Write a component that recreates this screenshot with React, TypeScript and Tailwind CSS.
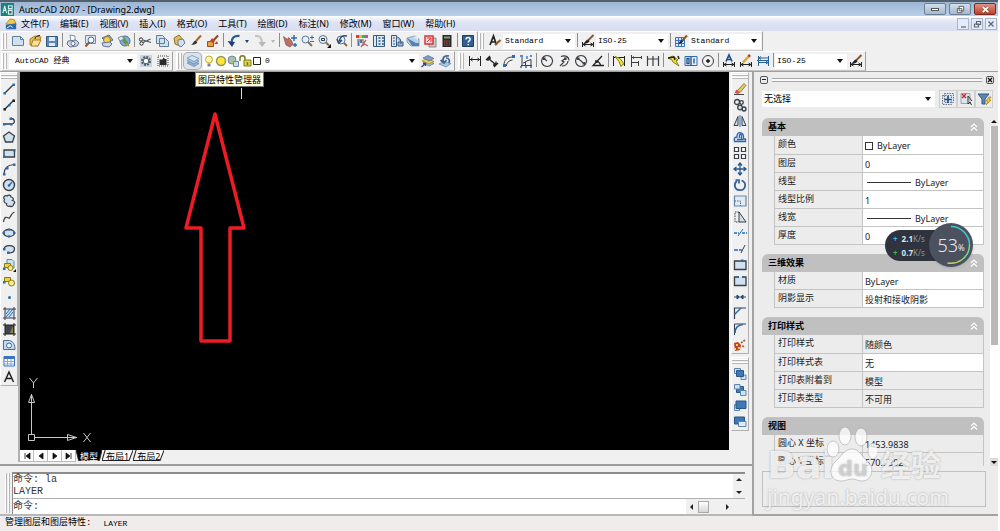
import React from 'react';
import clsx from 'clsx';

const K = '#3a3f46';
const B = '#2a6cb0';
const L = '#cfe0ef';
const Y = '#f2d23c';

const DIM_LINE = (
  <path d="M2.500 11.500h11M2.500 9v5M13.500 9v5M5.500 10l-2.500 1.500 2.500 1.500M10.500 10l2.500 1.500-2.500 1.500" stroke="#222" fill="none" />
);

const ORDER_FRONT = <path d="M4.500 4.500h7v6h-7z" fill="#3f78b3" stroke="#24588f" />;

const ICONS: Record<string, React.ReactNode> = {
  new: <path d="M2.500 3.500h8l3 3v6h-11z M10.500 3.500v3h3" fill={L} stroke="#5f7f9c" />,
  open: (
    <>
      <path d="M3 6l5-3 6 1-3 9-8-1z" fill="#e8bd4e" stroke="#a97e22" />
      <path d="M6 7h8l-3 6H4z" fill="#f8e39b" stroke="#a97e22" />
      <path d="M8 6c0-2 2-3.500 5-3.500" stroke="#222" fill="none" />
    </>
  ),
  save: (
    <>
      <path d="M2.500 3.500h11v10h-11z" fill="#5b86b5" stroke="#35597f" />
      <path d="M5 4h6v4H5zM5 10h6v3H5z" fill="#dfeaf5" />
    </>
  ),
  plot: (
    <>
      <path d="M5 2l5 1v5l-4 .5z" fill="#fff" stroke="#8290a8" />
      <path d="M3 8l8-1 3 3-2 3-7 1-3-3z" fill="#cdd6e6" stroke="#65738f" />
      <circle cx="8" cy="10.500" r="2" fill="#fff" stroke="#65738f" />
    </>
  ),
  preview: (
    <>
      <path d="M3.500 2.500h10v8h-10z" fill="#dce9f5" stroke="#6f8fb0" />
      <circle cx="9" cy="7" r="3" fill="#f6fbff" stroke="#4b6f95" />
      <path d="M7 9.500l-3.500 4" stroke="#8a5a2c" strokeWidth="2" />
    </>
  ),
  publish: (
    <>
      <path d="M3 5l7-3 4 5-6 3z" fill="#8fb4d9" stroke="#4d6e94" />
      <circle cx="8" cy="7" r="3.500" fill="#f0cf58" stroke="#9c7a1c" />
      <path d="M3 10l8-1 2 2-3 3-6-1z" fill="#cdd6e6" stroke="#65738f" />
    </>
  ),
  globe: (
    <>
      <circle cx="9" cy="8" r="5" fill="#7fb0d6" stroke="#4d6e94" />
      <path d="M7 4c3 0 2 3 4 4s1 3-1 4c-2-1-2-3-4-4z" fill="#5b9a4e" />
      <path d="M2 5l4-2 2 3-4 2z" fill="#dfe7f1" stroke="#768aa5" />
      <path d="M10 11l3 2" stroke="#c79a2a" strokeWidth="2" />
    </>
  ),
  cut: (
    <>
      <path d="M6 7l8 2.500M6 9.500L13.500 6" stroke="#4c5866" strokeWidth="1.300" />
      <circle cx="4" cy="6.500" r="1.700" fill="none" stroke="#333" />
      <circle cx="4.500" cy="10.500" r="1.700" fill="none" stroke="#333" />
    </>
  ),
  copy: <path d="M2.500 2.500h6l2 2v6h-8z M5.500 5.500h6l3 3v5h-9z" fill={L} stroke="#5f7f9c" />,
  paste: (
    <>
      <path d="M3 5l5-3 5 6-4 5-5-2z" fill="#e2bb66" stroke="#94702a" />
      <path d="M7 7l5-1 2 4-4 4-3-2z" fill={L} stroke="#5f7f9c" />
    </>
  ),
  match: (
    <>
      <path d="M8 8l5-5.500" stroke="#a8662c" strokeWidth="2" />
      <path d="M3 11.500c2 0 2-3 4.500-4l1.800 1.800c-1 2.200-3.500 3-6.300 2.200z" fill="#333" />
    </>
  ),
  blockedit: (
    <>
      <path d="M2.500 8.500h6v5h-6z" fill="#e9a23c" stroke="#9a4d1e" />
      <path d="M7 9l6-6.500" stroke="#8a4a22" strokeWidth="2" />
      <path d="M5 8l2-3 3 3-2 2zM9 11l3-3 1 3z" fill="#c2432c" />
    </>
  ),
  undo: (
    <>
      <path d="M13.500 3C8 2.500 5.500 5 5.500 10" stroke="#2a5c92" strokeWidth="2.200" fill="none" />
      <path d="M1.500 8l4.500 6 3-5z" fill="#1f3f74" />
    </>
  ),
  redo: (
    <>
      <path d="M3 3c5-.5 7 2 7 7" stroke="#c4c4c4" strokeWidth="2.200" fill="none" />
      <path d="M6.500 9l3.500 5 4-5z" fill="#b8b8b8" />
    </>
  ),
  pan: (
    <>
      <path d="M1.500 3.500l4 3 1-2 3 3 1.500 4-3 2.500-4-2z" fill="#b8706a" stroke="#8a4c48" strokeWidth=".7" />
      <path d="M12 2v6M9 5h6M11 12h4M13 10v4" stroke={B} strokeWidth="1.400" />
    </>
  ),
  zoomrt: (
    <>
      <circle cx="6.500" cy="6.500" r="3.500" fill="#e5f0fa" stroke="#56789c" />
      <path d="M9 9l4 4" stroke="#8a6a48" strokeWidth="2" />
      <path d="M11 4.500h4M13 2.500v4M11 8.500h4" stroke={B} />
    </>
  ),
  zoomwin: (
    <>
      <circle cx="7" cy="6.500" r="4" fill="#e5f0fa" stroke="#56789c" />
      <path d="M5.500 5.500h3v2h-3z" fill="none" stroke="#333" />
      <path d="M10 9.500l3 3" stroke="#8a6a48" strokeWidth="2" />
      <path d="M15 11v4h-4z" fill="#111" />
    </>
  ),
  zoomprev: (
    <>
      <circle cx="8" cy="7" r="4" fill="#e5f0fa" stroke="#56789c" />
      <path d="M11 10l3 3" stroke="#8a6a48" strokeWidth="2" />
      <path d="M14 3C9 2 7 4 6.500 8M4 6l2 4 3-3" stroke="#2a4c78" strokeWidth="1.500" fill="none" />
    </>
  ),
  props: (
    <>
      <path d="M2 2h3v3H2z" fill="#e33" />
      <path d="M5 2h3v3H5z" fill="#e3c12b" />
      <path d="M8 2h3v3H8z" fill="#3bb54a" />
      <path d="M11 2h3v3h-3z" fill="#d63bd0" />
      <path d="M3 7h6v6M12 7l-5 7M9 10l5 3" stroke="#b26a6a" strokeWidth="1.300" fill="none" />
      <path d="M4.500 8v5M7 7v3" stroke="#4575b0" strokeWidth="2" />
    </>
  ),
  dcenter: (
    <>
      <path d="M2.500 2.500h11v11h-11z" fill="#dce9f5" stroke="#35597f" />
      <path d="M5.500 3v10" stroke="#35597f" />
      <path d="M7.500 5h2M11 5h2M7.500 8h2M11 8h2M7.500 11h2M11 11h2" stroke="#35597f" strokeWidth="1.500" />
    </>
  ),
  palettes: (
    <>
      <path d="M3.500 2.500h5v11h-5z" fill="#dce9f5" stroke="#35597f" />
      <path d="M5 5h2M5 8h2M5 11h2" stroke="#35597f" />
      <path d="M8 4c4 0 5 3 5 7M10 9h5v4h-5z" stroke="#35597f" fill="#9dbbd8" />
    </>
  ),
  sheetset: (
    <>
      <path d="M2 5l8-2 4 3v7H6l-4-4z" fill="#bcd3e6" stroke="#8aa2b6" />
      <path d="M2 5l9 5h3v3H7z" fill="#4f86b5" />
      <path d="M8 4l5-1v4z" fill="#e8eef4" />
    </>
  ),
  markup: (
    <>
      <path d="M7 5h7v9H7z" fill="#c6c6c6" stroke="#8c8c8c" />
      <path d="M3 3h8v8H3z" fill="#f7dada" stroke="#d8343a" strokeWidth="1.500" />
      <path d="M5 5h4v4M5 9l4-4" stroke="#d8343a" fill="none" />
    </>
  ),
  calc: (
    <>
      <path d="M3.500 2h9v12h-9z" fill="#2b2b2b" />
      <path d="M5 3.500h6v2H5z" fill="#7ba56b" />
      <path d="M5 8h6M5 10h6M5 12h6" stroke="#c24a4a" strokeDasharray="1.500 .8" />
    </>
  ),
  help: (
    <>
      <path d="M2.500 2.500h11v11h-11z" fill="#2f5f94" stroke="#1d3f66" />
      <path d="M6 6.500c0-3 4.500-2.500 4.200 0-.2 1.400-2 1.300-2 3M8.200 11v1.300" stroke="#fff" strokeWidth="1.500" fill="none" />
    </>
  ),
  textstyle: (
    <>
      <path d="M3 12l3.500-9 3 9M4.300 9h4" stroke="#222" strokeWidth="1.700" fill="none" />
      <path d="M8 12l5.500-5" stroke="#8a5a2c" strokeWidth="2.200" />
    </>
  ),
  dimstyle: (
    <>
      {DIM_LINE}
      <path d="M8 7.500l5.500-5.500" stroke="#8a5a2c" strokeWidth="2" />
      <path d="M3 10.500c2-.5 2.500-3.500 5-4l1.500 2c-1 1.500-3.500 2.500-6.500 2z" fill="#222" />
    </>
  ),
  tablestyle: (
    <>
      <path d="M2.500 4.500h9v9h-9zM2.500 7.500h9M2.500 10.500h9M5.500 4.500v9M8.500 4.500v9" fill="#dce9fa" stroke="#3b73c4" />
      <path d="M9 8l5-5.500" stroke="#8a5a2c" strokeWidth="2" />
      <path d="M5 10.500c1.500-.5 2-3 4-3.500l1 1.500c-1 1.500-3 2.500-5 2z" fill="#222" />
    </>
  ),
  gear: (
    <>
      <path d="M2 2h12v12H2z" fill="#c9d6e2" />
      <circle cx="8" cy="8" r="4" fill="none" stroke="#4c5c6c" strokeWidth="2" strokeDasharray="2 1.100" />
      <circle cx="8" cy="8" r="2.800" fill="#fff" stroke="#4c5c6c" />
    </>
  ),
  gearsave: (
    <>
      <path d="M3 3h10v10H3z" fill="none" stroke="#444" strokeDasharray="1 1" />
      <path d="M4.500 6.500h3l1-2 1.500 1.500h1.500v6h-7z" fill="#2a2a2a" />
    </>
  ),
  layers: (
    <>
      <path d="M2 10l5-2.500 7 3-5 3z" fill="#8fb3d6" stroke="#5f86ad" strokeWidth=".7" />
      <path d="M2 7.500L7 5l7 3-5 3z" fill="#a9c6e2" stroke="#5f86ad" strokeWidth=".7" />
      <path d="M2 5l5-2.500 7 3-5 3z" fill="#d3e4f3" stroke="#5f86ad" strokeWidth=".7" />
    </>
  ),
  layercur: (
    <>
      <path d="M3 10l5-2.500 6 3-5 2.500z" fill="#a9c6e2" stroke="#4d6e94" strokeWidth=".7" />
      <path d="M2 8l5-2.500 7 3-5 2.500z" fill="#f0cf58" stroke="#9c7a1c" strokeWidth=".7" />
      <path d="M3 5l5-2.500 6 3-5 2.500z" fill="#7f9fc0" stroke="#4d6e94" strokeWidth=".7" />
      <path d="M1.500 14l4-3.500M3 10.500h2.500V13" stroke="#2a4c78" strokeWidth="1.300" />
    </>
  ),
  layerprev: (
    <>
      <path d="M2 11l5-2.500 7 2-5 3.500z" fill="#a9c6e2" stroke="#5f86ad" strokeWidth=".7" />
      <path d="M12 3C7 2 5 5 6.500 9M3.500 7l3.500 3 2.500-3M9 5c3 0 4 2 3 5" stroke="#41658f" strokeWidth="1.700" fill="none" />
    </>
  ),
  bulb: (
    <>
      <circle cx="8" cy="6.500" r="3.500" fill="#fff7b0" stroke="#c9a92e" />
      <path d="M6.500 10.500h3v3h-3z" fill="#7c8590" />
    </>
  ),
  sun: <circle cx="8" cy="8" r="4.500" fill="#ffe43a" stroke="#8f9a5a" strokeWidth="1.500" />,
  vpsun: (
    <>
      <circle cx="7" cy="7" r="4" fill="#a9c0a9" stroke="#6f8aa0" />
      <path d="M8.500 8.500h5v5h-5z" fill="#cfdbe6" stroke="#6f8aa0" />
    </>
  ),
  lock: (
    <>
      <path d="M7 7h7v6H7z" fill="#dcd84a" stroke="#7c7a1c" />
      <path d="M3 8V5c0-3 5-3 5 0v2M10.500 9v3" stroke="#7c7a1c" strokeWidth="1.500" fill="none" />
    </>
  ),
  swatch: <path d="M4.500 4.500h7v7h-7z" fill="#fff" stroke="#222" />,
  dimlin: <path d="M2.500 3v10M13.500 3v10M3 6.500h10M5.500 5L3.500 6.500l2 1.500M10.500 5l2 1.500-2 1.500" stroke="#222" fill="none" />,
  dimali: <path d="M2 7l4-4M10 14l4-4M4.500 5.500l7 6M4 8V5h3M12 8.500v3.500H9" stroke="#222" strokeWidth="1.300" fill="none" />,
  dimarc: (
    <>
      <path d="M3 12c0-5 3-8 9-8M5.500 13c0-3 2-5.500 6-6" stroke={K} fill="none" />
      <path d="M2 11h3v3H2zM11 2h3v3h-3z" fill={B} />
    </>
  ),
  dimord: (
    <>
      <path d="M4 4v9M3 12.500h11M7.500 12.500V8.500l5.500-2v6M5 10l3-1" stroke={K} fill="none" />
      <path d="M2 3h3M9 3v3M12 3h2M2 14h2M7 14h2M12 14h2" stroke={B} strokeWidth="1.300" />
    </>
  ),
  dimrad: <path d="M8 2.500a5.500 5.500 0 1 0 .1 0M8 8L4.500 5M4.500 7V5h2" stroke={K} fill="none" strokeWidth="1.200" />,
  dimjog: <path d="M5 3.500c5-2 8 1 8 4M12 8c0 3-3 5-6 5M4 13l4-4-2-1 4-3M8 5h2v2" stroke={K} fill="none" strokeWidth="1.200" />,
  dimdia: <path d="M8 2.500a5.500 5.500 0 1 0 .1 0M4.500 5l7 6M4.500 7V5h2M11.500 9v2h-2" stroke={K} fill="none" strokeWidth="1.200" />,
  dimang: <path d="M12 3L3 12.500h11M6 8c2 0 4 2 4.500 4M5 8h2v2" stroke="#222" fill="none" strokeWidth="1.300" />,
  qdim: (
    <>
      <path d="M2.500 3v10M13.500 3v10M3 4.500h10" stroke="#222" />
      <path d="M4 3.500l5 2 4 5.500-2 1-1 1.500-2-5z" fill="#f5e52c" stroke="#8a7d12" />
    </>
  ),
  dimbase: <path d="M3.500 2v12M4 4.500h9.500M13.500 3v3M4 9.500h6M10.500 8v5M6 3.500L4.500 4.500 6 5.500" stroke={K} fill="none" />,
  dimcont: <path d="M2.500 3v10M8 3v10M13.500 3v10M3 6h10" stroke={K} fill="none" strokeWidth="1.200" />,
  leader: (
    <>
      <path d="M2 5l5-2 5 4-2 1 3 5-6-4-1-2z" fill="#f5e52c" stroke="#8a7d12" />
      <path d="M2 5l6-1 1 3M12 3l1 3" stroke="#222" strokeWidth="1.500" fill="none" />
    </>
  ),
  tol: (
    <>
      <path d="M2 3.500h12v9H2z" fill="#e6eff9" stroke={B} />
      <path d="M8 3.500v9M4 5.500h2v5H4zM11 5.500v5" stroke="#224f85" fill="none" strokeWidth="1.300" />
    </>
  ),
  center: (
    <>
      <circle cx="8" cy="8" r="5.500" fill="none" stroke={K} />
      <path d="M8 6v4M6 8h4" stroke="#111" strokeWidth="1.400" />
    </>
  ),
  dimedit: (
    <>
      {DIM_LINE}
      <path d="M5 8.500L8 2l3 6.500M6 6.500h4" stroke="#1e4f8c" strokeWidth="1.700" fill="none" />
    </>
  ),
  dimtedit: (
    <>
      {DIM_LINE}
      <path d="M5 9.500L11 3" stroke="#e0a62c" strokeWidth="2.500" />
      <path d="M10.500 3.500L12 2" stroke="#b33" strokeWidth="2.500" />
    </>
  ),
  dimupd: <path d="M3.500 3v10M13.500 3v10M4 5h9M4 9.500h9M6 3.500L4 5l2 1.500M11 8l2 1.500-2 1.500M2 7.500h12" stroke="#24609c" fill="none" />,

  line: (
    <>
      <path d="M4 12L12 4" stroke={K} strokeWidth="1.400" />
      <path d="M2.500 11h2.500v2.500H2.500zM11.500 2.500H14V5h-2.500z" fill={B} />
    </>
  ),
  xline: (
    <>
      <path d="M3 13L13 3" stroke="#333" strokeWidth="1.400" />
      <path d="M2.500 11h2.500v2.500H2.500zM11.500 2.500H14V5h-2.500z" fill="#222" />
      <path d="M7 7h2.500v2.500H7z" fill={B} />
    </>
  ),
  pline: (
    <>
      <path d="M3 11h7c5 0 4-5.500 0-5.500" stroke={K} strokeWidth="1.300" fill="none" />
      <path d="M2 10h2.500v2.500H2zM9 10h2.500v2.500H9zM8.500 4.500H11V7H8.500z" fill={B} />
    </>
  ),
  polygon: <path d="M8 3l5.500 4-2 6h-7l-2-6z" fill={L} stroke={K} strokeWidth="1.300" />,
  rect: (
    <>
      <path d="M3 5h10.500v7H3z" fill={L} stroke={K} strokeWidth="1.300" />
      <path d="M2 10.500h2.500V13H2zM12 4h2.500v2.500H12z" fill={B} />
    </>
  ),
  arc: (
    <>
      <path d="M3 13c0-6 4-9 10-9.500" stroke={K} strokeWidth="1.200" fill="none" />
      <path d="M2 12h2.500v2.500H2zM5 6h2.500v2.500H5zM12 2.500h2.500V5H12z" fill={B} />
    </>
  ),
  circle: (
    <>
      <circle cx="8" cy="8" r="5.500" fill={L} stroke={K} strokeWidth="1.400" />
      <path d="M8 8.500l3-3.500" stroke={B} strokeWidth="1.400" />
      <circle cx="8" cy="8.500" r="1.300" fill={B} />
    </>
  ),
  revcloud: (
    <path d="M3.500 6.500C1.500 4.500 3.500 2 6 3c1.500-1.500 4-1 4 1 2.500 0 3 2.500 1.500 3.500C14 8 14.500 10.500 12.500 11c.5 2-2 3.500-3.500 2-2 1-4-.5-3.500-2.500C3 10 2.500 8 3.500 6.500z" fill={L} stroke={K} strokeWidth="1.200" />
  ),
  spline: <path d="M2.500 13c1-6 3-5 5-4s2-5 6-6" stroke={K} strokeWidth="1.200" fill="none" />,
  ellipse: (
    <>
      <ellipse cx="8" cy="8" rx="5.500" ry="3.500" fill={L} stroke={K} strokeWidth="1.300" />
      <path d="M1.500 7H4v2H1.500zM12 7h2.500v2H12zM7 3.500h2v2H7zM7 10.500h2v2H7z" fill={B} />
    </>
  ),
  ellarc: (
    <>
      <path d="M3 8c1-5 10.500-4 10.500 0 0 3-3 4-6 4" fill={L} stroke={K} strokeWidth="1.300" />
      <path d="M2 7h2.500v2.500H2zM6 10.500h2.500V13H6z" fill={B} />
    </>
  ),
  insblock: (
    <>
      <path d="M6 2.500h5l2 2V11H6z" fill={L} stroke="#5f86ad" />
      <path d="M3.500 6.500h6v4h-6z" fill={Y} stroke="#8a7d12" />
      <circle cx="9.500" cy="11" r="2.500" fill="#f6ec9a" stroke="#8a7d12" />
      <path d="M15 12v3h-3z" fill="#111" />
      <path d="M2 10.500h2.500V13H2z" fill={B} />
    </>
  ),
  mkblock: (
    <>
      <path d="M3.500 4.500h6v4h-6z" fill={Y} stroke="#8a7d12" />
      <circle cx="10.500" cy="10" r="3" fill="#f6ec9a" stroke="#8a7d12" />
      <path d="M2 8h2.500v2.500H2z" fill={B} />
    </>
  ),
  point: <circle cx="8.500" cy="8.500" r="1.500" fill={B} />,
  hatch: (
    <>
      <path d="M4 4h9v9H4z" fill="#cfe0f4" />
      <path d="M4 2v13M13 2v13M2 4h13M2 13h13" stroke={K} />
      <path d="M5 9l4-5M5 12l7-8M8 12l4-5" stroke={B} />
    </>
  ),
  gradient: (
    <>
      <path d="M4 4h9v9H4z" fill="#3f4652" />
      <path d="M4 2v13M13 2v13M2 4h13M2 13h13" stroke="#222" />
      <path d="M9 12l3-7v7z" fill="#8d8540" />
    </>
  ),
  region: (
    <>
      <path d="M2.500 3.500h6c4 1 5.500 4 5.500 9H2.500z" fill="#c6dbef" stroke="#4d6e94" />
      <circle cx="8" cy="8.500" r="2.500" fill="#eef5fb" stroke={B} />
    </>
  ),
  table: (
    <>
      <path d="M3 3.500h10.500v9.500H3z" fill="#fff" stroke="#3b73c4" />
      <path d="M3 4h10.500v2H3z" fill="#3b73c4" />
      <path d="M3 8.500h10M3 11h10M6.500 6v7M10 6v7" stroke="#7fa6dd" />
    </>
  ),
  mtext: <path d="M3.500 13L8 3l4.500 10M5.300 9.500h5.400" stroke="#222" strokeWidth="1.500" fill="none" />,

  erase: (
    <>
      <path d="M5 10l7-7.500 2 2-6 7z" fill="#e9c65a" stroke="#6a5a2c" strokeWidth=".7" />
      <path d="M4.500 8.500L8 11.500l-2 1.500-3.500-1z" fill="#d45454" />
      <path d="M2 13.500h10" stroke="#444" />
    </>
  ),
  mcopy: (
    <>
      <circle cx="5" cy="5" r="2.500" fill="none" stroke={K} strokeWidth="1.300" />
      <circle cx="9.500" cy="5.500" r="1.800" fill="none" stroke={K} strokeWidth="1.300" />
      <circle cx="12" cy="12" r="2" fill={L} stroke={K} strokeWidth="1.300" />
      <circle cx="8" cy="10.500" r="2.300" fill={L} stroke={K} strokeWidth="1.300" />
    </>
  ),
  mirror: (
    <>
      <path d="M6 3.500v9H2zM10 3.500v9h4z" fill={L} stroke={K} />
      <path d="M8 2v12" stroke={B} />
    </>
  ),
  offset: <path d="M2.500 12.500h11V10h-2c1-8-7.500-8-6.500-2-3 0-3 2-2.500 4.500zM5 10.500h6M7.500 9V6c1-1.500 2 0 2 1v3" fill={L} stroke="#3268a8" strokeWidth="1.300" />,
  array: <path d="M2.500 2.500h4v4h-4zM9.500 2.500h4v4h-4zM2.500 9.500h4v4h-4zM9.500 9.500h4v4h-4z" fill="#fff" stroke={K} strokeWidth="1.200" />,
  move: <path d="M8 2v12M2 8h12M6 4.500L8 2l2 2.500M6 11.500L8 14l2-2.500M4.500 6L2 8l2.500 2M11.500 6L14 8l-2.500 2" stroke="#24588f" strokeWidth="1.300" fill="none" />,
  rotate: <path d="M5 4C1.500 6.500 2 13 8 13.200c6 0 7-7.700 1.500-9.700M3.500 3H7v3.500" stroke="#2f5f94" strokeWidth="1.700" fill="none" />,
  scale: (
    <>
      <path d="M2.500 3h11.500v10H2.500z" fill="#dfebf5" stroke="#6c88a6" strokeWidth="1.200" />
      <path d="M2.500 8h6v5" stroke="#5a6a7c" strokeDasharray="1.500 1" />
    </>
  ),
  stretch: (
    <>
      <path d="M7 3v10h7z" fill={L} stroke={K} />
      <path d="M7 3H3v10h4" stroke={K} strokeDasharray="1.500 1" />
    </>
  ),
  trim: (
    <>
      <path d="M2 8h5M10 8h5" stroke={B} strokeWidth="1.300" strokeDasharray="3 1" />
      <path d="M6 11l5-7" stroke={B} />
    </>
  ),
  extend: (
    <>
      <path d="M2 9h8" stroke={B} strokeWidth="1.300" strokeDasharray="4 1" />
      <path d="M9 12l4-8" stroke={K} />
    </>
  ),
  breakpt: (
    <>
      <path d="M2.500 4h11.500v8.500H2.500z" fill={L} stroke={K} strokeWidth="1.300" />
      <path d="M9 2.500h2.500V5H9z" fill={B} />
    </>
  ),
  break: (
    <>
      <path d="M5.500 4h-3v8.500H14V4h-3" fill={L} stroke={K} strokeWidth="1.300" />
      <path d="M5 3h2v2H5zM10 3h2v2h-2z" fill={B} />
    </>
  ),
  join: <path d="M2 8h5M14 8H9M5 6L7.500 8 5 10zM11 6L8.500 8l2.500 2z" stroke="#24486f" fill="#24486f" />,
  chamfer: (
    <>
      <path d="M2.500 14V3H14" stroke={K} strokeWidth="1.200" fill="none" />
      <path d="M2.500 9.500l6.500-6.500" stroke={B} strokeWidth="1.500" />
    </>
  ),
  fillet: (
    <>
      <path d="M2.500 14V3H14" stroke={K} fill="none" />
      <path d="M3 12c0-5 3-8 8-8.500" stroke={B} strokeWidth="1.700" fill="none" />
    </>
  ),
  explode: (
    <>
      <path d="M2 6l4-1 3 3-1 5-5 1z" fill="#c93b2b" />
      <path d="M4 7h2v2H4zM6 10h2v2H6zM3 11h1v2H3z" fill="#f5d93c" />
      <path d="M9 6l4-3M10 9l3 1" stroke="#9a6a3a" strokeWidth="1.700" strokeDasharray="2 1" />
    </>
  ),
  front: (
    <>
      <path d="M2.500 2.500h6v5h-6zM9 9h5v4.500H9z" fill={L} stroke="#5f86ad" />
      {ORDER_FRONT}
    </>
  ),
  forward: (
    <>
      {ORDER_FRONT}
      <path d="M2.500 2.500h5.500v4.500H2.500zM8.500 8.500h5.500v5H8.500z" fill={L} stroke="#5f86ad" />
    </>
  ),
  above: (
    <>
      <path d="M2.500 6.500h5v6h-5z" fill={L} stroke="#5f86ad" />
      <path d="M4 3h10v7.500H4z" fill="#3f78b3" stroke="#24588f" />
    </>
  ),
  under: (
    <>
      <path d="M2.500 3h10v7h-10z" fill="#3f78b3" stroke="#24588f" />
      <path d="M6.500 7.500H14v5H6.500z" fill="#dfebf5" stroke="#5f86ad" />
    </>
  ),
  pickadd: (
    <>
      <path d="M2.500 4.500h9v9h-9zM4.500 2.500h9v9h-9z" fill="#dce6f0" stroke="#6a7686" strokeDasharray="1.500 1" />
      <path d="M8 5v7M4.500 8.500h7" stroke="#1e4f8c" strokeWidth="1.700" />
    </>
  ),
  select: (
    <>
      <path d="M3 2.500h9v10H3z" fill="#dce6f0" stroke="#98a4b2" />
      <path d="M4 3l4 4M8 3L4 7" stroke="#d02a2a" strokeWidth="1.500" />
      <path d="M10 5v8l2-2 1.500 3M10 5l4 5" stroke="#333" fill="none" />
    </>
  ),
  quicksel: (
    <>
      <path d="M2 3h11l-4 5v5H6V8z" fill="#5b86b5" stroke="#35597f" />
      <path d="M13 6l-3 4h2l-2 4 5-5h-2l2-3z" fill={Y} stroke="#9c7a1c" strokeWidth=".7" />
    </>
  ),
};

function Icon({ name }: { name: string }) {
  return (
    <svg viewBox="0 0 16 16" className="h-4 w-4 shrink-0" fill="none" aria-hidden="true">
      {ICONS[name]}
    </svg>
  );
}

function Tool({ name, active }: { name: string; active?: boolean }) {
  return (
    <button
      type="button"
      aria-label={name}
      className={clsx(
        'flex h-4 w-[17px] shrink-0 items-center justify-center',
        active && 'rounded-sm bg-[#dfe3e8] ring-1 ring-[#a9afb8]'
      )}
    >
      <Icon name={name} />
    </button>
  );
}

function Sep() {
  return (
    <span className="flex h-4 w-1 shrink-0 justify-center">
      <span className="h-3.5 w-px bg-[#8e8e8e]" />
    </span>
  );
}

// space separated tool names, "|" is a divider
function Tools({ names }: { names: string }) {
  return names.split(' ').map((n, i) => (n === '|' ? <Sep key={i} /> : <Tool key={i} name={n} />));
}

function Grip({ vertical }: { vertical?: boolean }) {
  return (
    <span className={clsx('flex shrink-0 gap-px', vertical ? 'h-[7px] w-4 flex-col' : 'w-[7px] self-stretch py-px')}>
      <span className={clsx('border-[#b5b5b5] bg-white', vertical ? 'h-0.5 w-full border-b' : 'h-full w-0.5 border-r')} />
      <span className={clsx('border-[#b5b5b5] bg-white', vertical ? 'h-0.5 w-full border-b' : 'h-full w-0.5 border-r')} />
    </span>
  );
}

function Toolbar({ label, children }: { label: string; children: React.ReactNode }) {
  return (
    <div
      role="toolbar"
      aria-label={label}
      className="flex h-5 shrink-0 items-center border border-t-white border-r-[#a0a0a0] border-b-[#c4c4c4] border-l-white pr-px"
    >
      <Grip />
      {children}
    </div>
  );
}

function Combo({ label, value, className }: { label: string; value: string; className?: string }) {
  return (
    <span className={clsx('relative flex h-[15px] shrink-0 items-center bg-white', className)}>
      <select
        aria-label={label}
        className="h-full w-full appearance-none bg-transparent pl-0.5 font-['Liberation_Mono','Noto_Sans_CJK_SC',monospace] text-[8px] text-black outline-none"
      >
        <option>{value}</option>
      </select>
      <svg viewBox="0 0 6 4" className="pointer-events-none absolute right-1 h-1 w-1.5">
        <path d="M0 0h6L3 4z" fill="#111" />
      </svg>
    </span>
  );
}

function Caret({ dim }: { dim?: boolean }) {
  return (
    <button type="button" aria-label="history" className="flex h-4 w-[9px] items-center justify-center">
      <svg viewBox="0 0 4 3" className="h-[3px] w-1">
        <path d="M0 0h4L2 3z" fill={dim ? '#b5b5b5' : '#1f3f74'} />
      </svg>
    </button>
  );
}

const MENUS = ['文件(F)', '编辑(E)', '视图(V)', '插入(I)', '格式(O)', '工具(T)', '绘图(D)', '标注(N)', '修改(M)', '窗口(W)', '帮助(H)'];

function TitleBar() {
  return (
    <header className="flex h-4 items-center border-t-2 border-[#54606e] bg-linear-to-b from-[#9cb5d2] to-[#b9d0ea] pr-0.5 pl-px">
      <svg viewBox="0 0 14 14" className="h-[13px] w-[13px]">
        <path d="M0 0h14v14H0z" fill="#1d7f7c" />
        <path d="M2 11l2-8 2 8M2.500 8h3M8 3h4v3H8zM8 8h4v4H8z" stroke="#d8f0ea" fill="none" strokeWidth="1.200" />
      </svg>
      <h1 className="ml-[5px] text-[9px] leading-[13px] text-black">AutoCAD 2007 - [Drawing2.dwg]</h1>
      <div className="ml-auto flex gap-[3px]">
        <button type="button" aria-label="最小化" className="flex h-3 w-[22px] items-center justify-center rounded-xs border border-[#6d7f96] bg-linear-to-b from-[#d3dfec] to-[#a5b8d0]">
          <span className="h-[3px] w-2 border border-[#555] bg-white" />
        </button>
        <button type="button" aria-label="还原" className="flex h-3 w-[22px] items-center justify-center rounded-xs border border-[#6d7f96] bg-linear-to-b from-[#d3dfec] to-[#a5b8d0]">
          <svg viewBox="0 0 10 10" className="h-[9px] w-[9px]">
            <path d="M3.500 1.500h5v5h-5zM1.500 4h5v4.500h-5z" fill="#fff" stroke="#555" />
          </svg>
        </button>
        <button type="button" aria-label="关闭" className="flex h-3 w-[22px] items-center justify-center rounded-xs border border-[#7a2c22] bg-linear-to-b from-[#dd9384] to-[#bf3b25]">
          <svg viewBox="0 0 10 10" className="h-[9px] w-[9px]">
            <path d="M2 2l6 6M8 2L2 8" stroke="#553" strokeWidth="3" />
            <path d="M2 2l6 6M8 2L2 8" stroke="#fff" strokeWidth="2" />
          </svg>
        </button>
      </div>
    </header>
  );
}

function MenuBar() {
  return (
    <nav className="flex h-[15px] items-center bg-linear-to-b from-white via-[#dfe4f4] via-40% to-[#d8ddf0] pr-px pl-[5px]">
      <svg viewBox="0 0 14 14" className="h-3 w-3">
        <path d="M1 7l5-6 5 1 2 6z" fill="#f2c94c" stroke="#b58a1e" />
        <path d="M1 8l12-2v7H1z" fill="#2e6aa8" />
        <path d="M2 12l4-3 3 2" stroke="#fff" fill="none" />
      </svg>
      <ul className="ml-1 flex gap-[11px] text-[9px] leading-[13px] text-black">
        {MENUS.map((m) => (
          <li key={m}>
            <button type="button">{m}</button>
          </li>
        ))}
      </ul>
      <div className="ml-auto flex gap-0.5">
        {['M3 8h5', 'M4.500 2.500h4v3h-4zM2.500 5h4v3h-4z', 'M2.500 2.500l5 5M7.500 2.500l-5 5'].map((d) => (
          <button key={d} type="button" aria-label="文档窗口" className="flex h-3 w-3 items-center justify-center border border-[#a9b6cc] bg-[#e6ecf7]">
            <svg viewBox="0 0 10 10" className="h-[10px] w-[10px]">
              <path d={d} stroke="#5c6675" fill="none" strokeWidth="1.200" />
            </svg>
          </button>
        ))}
      </div>
    </nav>
  );
}

function TopToolbars() {
  return (
    <div className="border-b border-[#a0a0a0] bg-[#f0f0f0]">
      <div className="flex pl-px">
        <Toolbar label="标准">
          <Tools names="new open save | plot preview publish globe | cut copy paste match blockedit | undo" />
          <Caret />
          <Tool name="redo" />
          <Caret dim />
          <Tools names="| pan zoomrt zoomwin zoomprev | props dcenter palettes sheetset markup calc | help" />
        </Toolbar>
        <Toolbar label="样式">
          <Tool name="textstyle" />
          <Combo label="文字样式" value="Standard" className="w-[72px]" />
          <Sep />
          <Tool name="dimstyle" />
          <Combo label="标注样式" value="ISO-25" className="w-[72px]" />
          <Sep />
          <Tool name="tablestyle" />
          <Combo label="表格样式" value="Standard" className="w-[72px]" />
        </Toolbar>
      </div>
      <div className="flex gap-[3px] pl-px">
        <Toolbar label="工作空间">
          <Combo label="工作空间" value="AutoCAD 经典" className="w-[128px] pl-1" />
          <Tools names="gear gearsave" />
        </Toolbar>
        <Toolbar label="图层">
          <Tool name="layers" active />
          <span className="ml-0.5 flex h-[15px] w-[216px] items-center bg-white">
            {['bulb', 'sun', 'vpsun', 'lock', 'swatch'].map((n) => (
              <span key={n} className="flex w-3 shrink-0 justify-center">
                <Icon name={n} />
              </span>
            ))}
            <Combo label="图层" value="0" className="w-[156px]" />
          </span>
          <Tools names="layercur layerprev" />
        </Toolbar>
        <Toolbar label="标注">
          <Tools names="dimlin dimali dimarc dimord | dimrad dimjog dimdia dimang | qdim dimbase dimcont | leader tol center | dimedit dimtedit dimupd |" />
          <Combo label="标注样式" value="ISO-25" className="w-[72px]" />
          <Tool name="dimstyle" />
        </Toolbar>
      </div>
    </div>
  );
}

function SideToolbar({ label, names }: { label: string; names: string }) {
  return (
    <div
      role="toolbar"
      aria-label={label}
      aria-orientation="vertical"
      className="flex w-[18px] flex-col items-center border border-t-white border-r-[#b0b0b0] border-b-[#b0b0b0] border-l-white pt-px"
    >
      <Grip vertical />
      <Tools names={names} />
    </div>
  );
}

function Canvas() {
  return (
    <div className="relative min-h-0 flex-1 overflow-hidden bg-black">
      <svg viewBox="0 0 240 380" className="absolute top-0 left-0 h-[380px] w-[240px]" fill="none">
        <path d="M221.500 16v11" stroke="#ddd" />
        <path d="M195 42l29 114h-14v113h-29V156h-15z" stroke="#ed1c24" strokeWidth="3.500" strokeLinejoin="round" />
      </svg>
      <svg viewBox="0 0 80 80" className="absolute bottom-0 left-0 h-20 w-20" fill="none" stroke="#c8c8c8">
        <path d="M8.500 64.500h6v6h-6zM11.500 64V24M8.500 32.500h6l-3-8zM15 67.500h42M47.500 64.500v6l9-3z" />
        <path d="M9.500 8l4 5 4-5M13.500 13v5M63.500 63l7 9M70.500 63l-7 9" />
      </svg>
      <div role="tooltip" className="absolute top-0 left-[175px] border border-[#777] bg-[#ffffe1] px-0.5 text-[9px] leading-[13px] whitespace-nowrap text-black">
        图层特性管理器
      </div>
    </div>
  );
}

function LayoutTabs() {
  return (
    <div className="flex h-3 shrink-0 items-stretch bg-[#f0f0f0]">
      {['M2 1v6M7 1v6L3 4z', 'M6 1v6L2 4z', 'M2 1v6l4-3z', 'M6 1v6M1 1v6l4-3z'].map((d) => (
        <button key={d} type="button" aria-label="布局导航" className="flex w-[14px] items-center justify-center border-r border-b border-[#bbb] bg-white">
          <svg viewBox="0 0 8 8" className="h-2 w-2">
            <path d={d} fill="#111" stroke="#111" strokeWidth=".8" />
          </svg>
        </button>
      ))}
      {['模型', '布局1', '布局2'].map((t, i) => (
        <button key={t} type="button" className={clsx('relative px-1 text-[9px] leading-[11px]', i === 0 ? 'text-white' : 'text-black')}>
          <svg viewBox="0 0 30 11" preserveAspectRatio="none" className="absolute inset-0 h-[11px] w-full">
            <path d={i === 0 ? 'M0 0l3 10.500h24L30 0' : 'M0 10.500L3 0M0 10.500h26L30 0'} fill={i === 0 ? '#000' : '#fff'} stroke="#222" />
          </svg>
          <span className="relative">{t}</span>
        </button>
      ))}
    </div>
  );
}

function Arrow({ d, label }: { d: string; label: string }) {
  return (
    <button type="button" aria-label={label} className="flex h-3 w-3 items-center justify-center">
      <svg viewBox="0 0 6 6" className="h-1.5 w-1.5">
        <path d={d} fill="#222" />
      </svg>
    </button>
  );
}

function CommandWindow() {
  return (
    <section className="flex h-[50px] shrink-0 border-t-2 border-[#9b9b9b] bg-[#f0f0f0] pt-1.5 pr-[7px] pl-[5px]">
      <Grip />
      <div className="flex min-w-0 flex-1 flex-col border-t-2 border-l border-[#8c8c8c] bg-white font-['Liberation_Mono','Noto_Sans_CJK_SC',monospace] text-[10px] text-[#333]">
        <div className="flex h-[25px] border-b border-[#b0b0b0]">
          <div className="flex-1 leading-3">
            <p>命令: la</p>
            <p>LAYER</p>
          </div>
          <div className="flex flex-col bg-[#f0f0f0]">
            <Arrow label="向上滚动" d="M0 4h6L3 1z" />
            <Arrow label="向下滚动" d="M0 2h6L3 5z" />
          </div>
        </div>
        <div className="flex h-[15px] items-center">
          <label htmlFor="cmd" className="leading-[15px]">命令:</label>
          <input id="cmd" className="min-w-0 flex-1 outline-none" />
          <div className="flex h-full items-center bg-[#f0f0f0] pr-3">
            <Arrow label="向左滚动" d="M4 0v6L1 3z" />
            <span className="mr-3 h-3 w-[11px] border border-[#aaa] bg-linear-to-b from-white to-[#d6d6d6]" />
            <Arrow label="向右滚动" d="M2 0v6l3-3z" />
          </div>
        </div>
      </div>
    </section>
  );
}

interface Row {
  label: string;
  value: string;
  kind?: 'swatch' | 'line';
  readOnly?: boolean;
}

const SECTIONS: { title: string; rows: Row[] }[] = [
  {
    title: '基本',
    rows: [
      { label: '颜色', value: 'ByLayer', kind: 'swatch' },
      { label: '图层', value: '0' },
      { label: '线型', value: 'ByLayer', kind: 'line' },
      { label: '线型比例', value: '1' },
      { label: '线宽', value: 'ByLayer', kind: 'line' },
      { label: '厚度', value: '0' },
    ],
  },
  {
    title: '三维效果',
    rows: [
      { label: '材质', value: 'ByLayer' },
      { label: '阴影显示', value: '投射和接收阴影' },
    ],
  },
  {
    title: '打印样式',
    rows: [
      { label: '打印样式', value: '随颜色', readOnly: true },
      { label: '打印样式表', value: '无' },
      { label: '打印表附着到', value: '模型', readOnly: true },
      { label: '打印表类型', value: '不可用', readOnly: true },
    ],
  },
  {
    title: '视图',
    rows: [
      { label: '圆心 X 坐标', value: '1453.9838', readOnly: true },
      { label: '圆心 Y 坐标', value: '570.9302', readOnly: true },
    ],
  },
];

function PropertySection({ title, rows }: { title: string; rows: Row[] }) {
  return (
    <section className="mb-[9px]">
      <h2 className="flex h-[18px] items-center justify-between rounded-t-md bg-[#c0c0c0] px-1.5 text-[9px] font-bold text-black">
        {title}
        <svg viewBox="0 0 8 8" className="h-2 w-2" fill="none" stroke="#fff" strokeWidth="1.200">
          <path d="M1 4l3-3 3 3M1 7.500l3-3 3 3" />
        </svg>
      </h2>
      <div className="pl-3">
        <table className="w-full table-fixed border-b border-l border-[#c4c4c4] text-[9px] leading-[11px] text-[#222]">
          <tbody>
            {rows.map((r) => (
              <tr key={r.label} className="h-[18px]">
                <th scope="row" className="w-[88px] border-r border-b border-[#c4c4c4] pl-[3px] text-left align-top font-normal leading-[15px] whitespace-nowrap">
                  {r.label}
                </th>
                <td className={clsx('border-r border-b border-[#c4c4c4] pt-0.5 pl-0.5', r.readOnly ? 'bg-[#ececec]' : 'bg-white')}>
                  <span className="flex items-center">
                    {r.kind === 'swatch' && <span className="mr-1 h-2 w-2 border border-[#333]" />}
                    {r.kind === 'line' && <span className="mr-1 ml-0.5 h-px w-11 bg-[#333]" />}
                    {r.value}
                  </span>
                </td>
              </tr>
            ))}
          </tbody>
        </table>
      </div>
    </section>
  );
}

function PropertiesPalette() {
  return (
    <aside className="flex w-[246px] shrink-0 flex-col border-b-2 border-l-2 border-[#a3a3a3] bg-[#ececec]">
      <div className="flex h-[15px] items-center gap-1 pr-1 pl-1.5">
        <button type="button" aria-label="折叠" className="flex h-2 w-2 items-center justify-center rounded-xs border border-[#555]">
          <span className="h-px w-1 bg-[#222]" />
        </button>
        <span className="h-1 flex-1 border-y border-[#a8a8a8] bg-[#f8f8f8]" />
        <button type="button" aria-label="关闭特性" className="flex h-2 w-2 items-center justify-center rounded-xs border border-[#555]">
          <svg viewBox="0 0 6 6" className="h-1.5 w-1.5">
            <path d="M1 1l4 4M5 1L1 5" stroke="#111" strokeWidth="1.300" />
          </svg>
        </button>
      </div>
      <div className="mt-[3px] flex items-center pr-[5px] pl-2">
        <span className="relative mr-1 flex h-4 flex-1 items-center bg-white">
          <select aria-label="选择" className="h-full w-full appearance-none bg-transparent pl-0.5 text-[9px] text-black outline-none">
            <option>无选择</option>
          </select>
          <svg viewBox="0 0 6 4" className="pointer-events-none absolute right-1 h-1 w-1.5">
            <path d="M0 0h6L3 4z" fill="#111" />
          </svg>
        </span>
        {['pickadd', 'select', 'quicksel'].map((n) => (
          <button key={n} type="button" aria-label={n} className="flex h-[18px] w-[18px] items-center justify-center border border-[#cfcfcf]">
            <Icon name={n} />
          </button>
        ))}
      </div>
      <div className="mt-2.5 flex min-h-0 flex-1 pl-2">
        <div className="min-w-0 flex-1 overflow-hidden">
          {SECTIONS.map((s) => (
            <PropertySection key={s.title} {...s} />
          ))}
        </div>
        <div className="ml-1.5 flex w-2 flex-col items-center bg-white">
          <span className="flex h-2 w-full items-center justify-center bg-[#ececec]">
            <svg viewBox="0 0 6 6" className="h-1.5 w-1.5"><path d="M0 4h6L3 1z" fill="#111" /></svg>
          </span>
          <span className="h-[63%] w-[7px] bg-[#b9b9b9]" />
          <span className="mt-auto flex h-2 w-full items-center justify-center bg-[#dcdcdc]">
            <svg viewBox="0 0 6 6" className="h-1.5 w-1.5"><path d="M0 2h6L3 5z" fill="#111" /></svg>
          </span>
        </div>
      </div>
      <div className="mt-[5px] mr-3 mb-[7px] ml-2 h-9 shrink-0 border border-[#c0c0c0]" />
    </aside>
  );
}

// floating net-speed / memory ball
function SpeedBall() {
  return (
    <div className="absolute top-[151px] right-[25px] flex h-11 items-center">
      <div className="-mr-5 h-[31px] w-16 rounded-l-full bg-[#2e333e] pt-0.5 pl-2 text-[8px] leading-[14px] text-[#8d939e]">
        <p className="flex gap-1"><b className="text-[#3fb4ee]">+</b><span><b className="text-[#dfe3ea]">2.1</b>K/s</span></p>
        <p className="flex gap-1"><b className="text-[#3cb54a]">+</b><span><b className="text-[#dfe3ea]">0.7</b>K/s</span></p>
      </div>
      <div className="relative flex h-11 w-11 items-center justify-center rounded-full bg-[#4c5160] text-[#e8eaef] shadow">
        <svg viewBox="0 0 44 44" className="absolute inset-0 h-11 w-11" fill="none" strokeWidth="1.500">
          <path d="M22 3.500a18.500 18.500 0 0 1 18.500 18.500" stroke="#45c8cf" />
          <path d="M40.500 22a18.500 18.500 0 0 1-8 15" stroke="#6fdc8c" />
          <path d="M32.500 37a18.500 18.500 0 0 1-14 3" stroke="#c9d25a" />
        </svg>
        <span className="text-[18px] font-light">53</span>
        <span className="pt-1.5 text-[8px]">%</span>
      </div>
    </div>
  );
}

function Watermark() {
  return (
    <div className="pointer-events-none absolute right-[51px] bottom-5 w-[180px] text-white/80 [text-shadow:0_0_2px_#777a]">
      <div className="flex items-end leading-none font-bold">
        <span className="font-['DejaVu_Sans',sans-serif] text-[38px] leading-9">Bai</span>
        <svg viewBox="0 0 50 56" className="-ml-2 h-[56px] w-[50px] shrink-0" fill="#fff" fillOpacity=".75" stroke="#999" strokeOpacity=".5">
          <ellipse cx="18" cy="9" rx="6" ry="9" />
          <ellipse cx="34" cy="10" rx="6" ry="9" />
          <ellipse cx="6" cy="22" rx="6" ry="8" />
          <ellipse cx="46" cy="24" rx="5" ry="8" />
          <path d="M25 22c8 0 10 8 16 13 7 6 4 19-6 19-4 0-6-2-10-2s-6 2-11 2C3 54 1 42 8 35c6-5 9-13 17-13z" />
          <text x="11" y="49" fontSize="21" fontWeight="700" fontFamily="DejaVu Sans" fill="#d4d4d4" stroke="none">du</text>
        </svg>
        <span className="ml-1 text-[30px] leading-9">经验</span>
      </div>
      <p className="text-[21px] leading-7">jingyan.baidu.com</p>
    </div>
  );
}

export default function App() {
  return (
    <div className="h-screen bg-white pr-0.5 font-['Noto_Sans','Noto_Sans_CJK_SC',sans-serif]">
      <div className="relative flex h-full flex-col overflow-hidden bg-[#f0f0f0]">
        <TitleBar />
        <MenuBar />
        <TopToolbars />
        <div className="relative flex min-h-0 flex-1">
          <div className="flex min-w-0 flex-1 flex-col border-b-2 border-[#b8b8b8]">
            <div className="flex min-h-0 flex-1 pb-0.5">
              <div className="w-5 shrink-0 border-r-2 border-[#b0b0b0]">
                <SideToolbar label="绘图" names="line xline pline polygon rect arc circle revcloud spline ellipse ellarc insblock mkblock point hatch gradient region table mtext" />
              </div>
              <div className="flex min-w-0 flex-1 flex-col">
                <Canvas />
                <LayoutTabs />
              </div>
              <div className="flex w-[23px] shrink-0 flex-col gap-[3px] pl-0.5">
                <SideToolbar label="修改" names="erase mcopy mirror offset array move rotate scale stretch trim extend breakpt break join chamfer fillet explode" />
                <SideToolbar label="绘图次序" names="front forward above under" />
              </div>
            </div>
            <CommandWindow />
          </div>
          <PropertiesPalette />
          <SpeedBall />
        </div>
        <footer className="flex h-[15px] shrink-0 items-center gap-3 bg-[#f0eceb] pl-[5px] font-['Liberation_Mono','Noto_Sans_CJK_SC',monospace] text-black">
          <span className="text-[9px]">管理图层和图层特性:</span>
          <span className="text-[8px]">LAYER</span>
        </footer>
        <Watermark />
      </div>
    </div>
  );
}
